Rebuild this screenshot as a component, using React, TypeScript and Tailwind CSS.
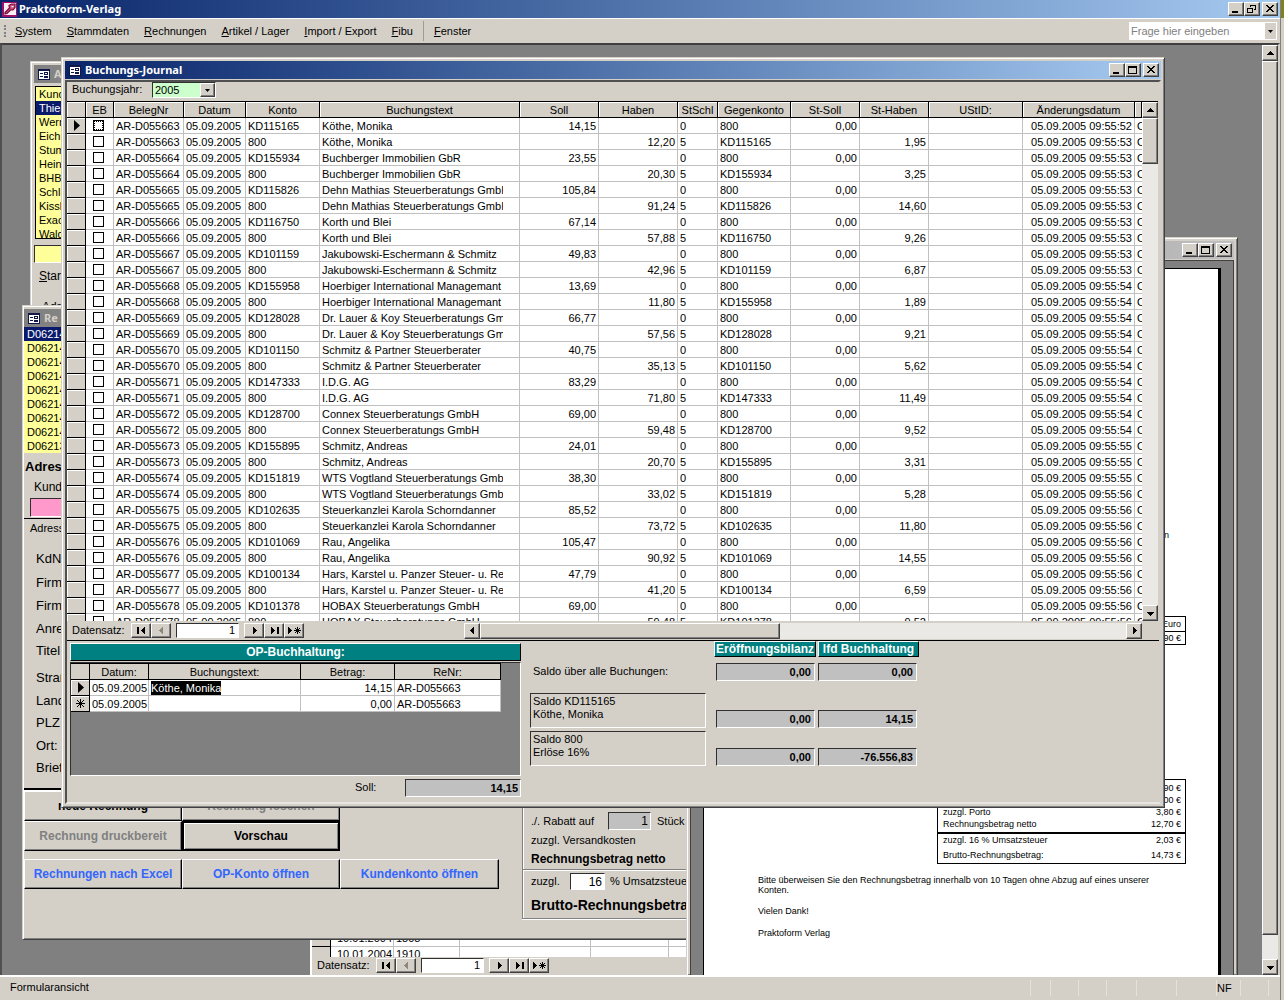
import React from "react";

type Booking = {
  beleg: string;
  konto: string;
  text: string;
  soll: string;
  haben: string;
  schl: string;
  gegen: string;
  stSoll: string;
  stHaben: string;
  zeit: string;
};

const source: [string, string, string, string, string, string][] = [
  ["63", "KD115165", "Köthe, Monika", "14,15", "12,20", "1,95"],
  ["64", "KD155934", "Buchberger Immobilien GbR", "23,55", "20,30", "3,25"],
  ["65", "KD115826", "Dehn Mathias Steuerberatungs GmbH", "105,84", "91,24", "14,60"],
  ["66", "KD116750", "Korth und Blei", "67,14", "57,88", "9,26"],
  ["67", "KD101159", "Jakubowski-Eschermann & Schmitz", "49,83", "42,96", "6,87"],
  ["68", "KD155958", "Hoerbiger International Managemant S", "13,69", "11,80", "1,89"],
  ["69", "KD128028", "Dr. Lauer & Koy Steuerberatungs Gm", "66,77", "57,56", "9,21"],
  ["70", "KD101150", "Schmitz & Partner Steuerberater", "40,75", "35,13", "5,62"],
  ["71", "KD147333", "I.D.G. AG", "83,29", "71,80", "11,49"],
  ["72", "KD128700", "Connex Steuerberatungs GmbH", "69,00", "59,48", "9,52"],
  ["73", "KD155895", "Schmitz, Andreas", "24,01", "20,70", "3,31"],
  ["74", "KD151819", "WTS Vogtland Steuerberatungs GmbH", "38,30", "33,02", "5,28"],
  ["75", "KD102635", "Steuerkanzlei Karola Schorndanner", "85,52", "73,72", "11,80"],
  ["76", "KD101069", "Rau, Angelika", "105,47", "90,92", "14,55"],
  ["77", "KD100134", "Hars, Karstel u. Panzer Steuer- u. Re", "47,79", "41,20", "6,59"],
  ["78", "KD101378", "HOBAX Steuerberatungs GmbH", "69,00", "59,48", "9,52"],
];

function seconds(i: number) {
  if (i === 0) return "52";
  if (i < 10) return "53";
  if (i < 20) return "54";
  if (i < 23) return "55";
  return "56";
}

const bookings: Booking[] = source.flatMap(([nr, kd, text, soll, haben, steuer], i) => [
  {
    beleg: `AR-D0556${nr}`, konto: kd, text, soll, haben: "", schl: "0", gegen: "800",
    stSoll: "0,00", stHaben: "", zeit: `05.09.2005 09:55:${seconds(2 * i)}`,
  },
  {
    beleg: `AR-D0556${nr}`, konto: "800", text, soll: "", haben, schl: "5", gegen: kd,
    stSoll: "", stHaben: steuer, zeit: `05.09.2005 09:55:${seconds(2 * i + 1)}`,
  },
]);

const raised =
  "border border-white border-r-[#404040] border-b-[#404040] bg-[#d4d0c8] shadow-[inset_-1px_-1px_0_#808080]";
const windowEdge =
  "border border-[#d4d0c8] border-r-[#404040] border-b-[#404040] bg-[#d4d0c8] shadow-[inset_1px_1px_0_#fff,inset_-1px_-1px_0_#808080]";
const sunken = "border border-[#303030] border-r-white border-b-white";

function Tri({ dir, color = "#000" }: { dir: "up" | "down" | "left" | "right"; color?: string }) {
  const d = {
    up: "M4 2h1v1h1v1h1v1h1v1H1V5h1V4h1V3h1z",
    down: "M1 3h7v1H7v1H6v1H5v1H4V6H3V5H2V4H1z",
    left: "M6 1v7H5V7H4V6H3V5H2V4h1V3h1V2h1V1z",
    right: "M3 1v7h1V7h1V6h1V5h1V4H6V3H5V2H4V1z",
  }[dir];
  return (
    <svg width="9" height="9" viewBox="0 0 9 9" shapeRendering="crispEdges" aria-hidden="true">
      <path d={d} fill={color} />
    </svg>
  );
}

function Caption({ kind, label }: { kind: "min" | "max" | "restore" | "close"; label: string }) {
  return (
    <button type="button" aria-label={label} className={`flex h-[14px] w-4 items-center justify-center ${raised}`}>
      <svg width="12" height="10" viewBox="0 0 12 10" shapeRendering="crispEdges" fill="none" stroke="#000" aria-hidden="true">
        {kind === "min" && <path d="M2 8h6" strokeWidth="2" />}
        {kind === "max" && <path d="M1.5 1.5h8v7h-8zM1 2h9" />}
        {kind === "restore" && <path d="M4.500 3V1.500h5v4H8M4 1.500h6M1.500 4.500h5v4h-5zM1 4h6" />}
        {kind === "close" && <path d="M2 1l7 7M3 1l7 7M9 1L2 8M10 1L3 8" />}
      </svg>
    </button>
  );
}

function FormIcon() {
  return (
    <svg width="12" height="11" viewBox="0 0 12 11" shapeRendering="crispEdges" aria-hidden="true">
      <path d="M0 0h12v11H0z" fill="#10184a" />
      <path d="M1 2h10v8H1z" fill="#fff" />
      <path d="M2 4.500h3M2 7.500h3" stroke="#10184a" />
      <path d="M6.500 3.500h3v2h-3zM6.500 7.500h3v1h-3z" fill="none" stroke="#10184a" />
    </svg>
  );
}

function TitleBar({ title, tone, icon = true }: { title: string; tone: string; icon?: boolean }) {
  return (
    <div className={`flex h-[18px] items-center gap-1 pr-[2px] pl-1 ${tone}`}>
      {icon && <FormIcon />}
      <h2 className="flex-1 overflow-hidden font-['Noto_Sans',sans-serif] text-[11px] leading-[18px] font-bold whitespace-nowrap">
        {title}
      </h2>
      <div className="flex">
        <Caption kind="min" label="Minimieren" />
        <Caption kind="max" label="Maximieren" />
        <div className="w-[2px]" />
        <Caption kind="close" label="Schließen" />
      </div>
    </div>
  );
}

function NavButton({ kind, label }: { kind: "first" | "prev" | "next" | "last" | "new"; label: string }) {
  return (
    <button type="button" aria-label={label} className={`flex h-[15px] w-5 items-center justify-center ${raised}`}>
      <svg width="15" height="9" viewBox="0 0 15 9" shapeRendering="crispEdges" aria-hidden="true">
        {kind === "first" && <path d="M3 1h2v7H3zM11 1v7h-1V7H9V6H8V5H7V4h1V3h1V2h1V1z" />}
        {kind === "prev" && <path d="M9 1v7H8V7H7V6H6V5H5V4h1V3h1V2h1V1z" fill="#8c8880" />}
        {kind === "next" && <path d="M6 1v7h1V7h1V6h1V5h1V4H9V3H8V2H7V1z" />}
        {kind === "last" && <path d="M4 1v7h1V7h1V6h1V5h1V4H7V3H6V2H5V1zM10 1h2v7h-2z" />}
        {kind === "new" && (
          <g>
            <path d="M1 1v7h1V7h1V6h1V5h1V4H4V3H3V2H2V1z" />
            <path d="M10.500 1v7M7 4.500h7M8 2l5 5M13 2L8 7" stroke="#000" />
          </g>
        )}
      </svg>
    </button>
  );
}

function RecordNav({ id }: { id: string }) {
  return (
    <div className="flex items-center">
      <label htmlFor={id} className="w-[59px]">Datensatz:</label>
      <NavButton kind="first" label="Erster Datensatz" />
      <NavButton kind="prev" label="Vorheriger Datensatz" />
      <input id={id} defaultValue="1" className={`mx-[5px] h-[15px] w-[63px] bg-white pr-[3px] text-right ${sunken}`} />
      <NavButton kind="next" label="Nächster Datensatz" />
      <NavButton kind="last" label="Letzter Datensatz" />
      <NavButton kind="new" label="Neuer Datensatz" />
    </div>
  );
}

function ScrollButton({ dir, label }: { dir: "up" | "down" | "left" | "right"; label: string }) {
  return (
    <button type="button" aria-label={label} className={`flex h-4 w-4 shrink-0 items-center justify-center ${raised}`}>
      <Tri dir={dir} />
    </button>
  );
}

function AddressWindow() {
  const names = ["Kund", "Thiel", "Wern", "Eichn", "Stum", "Hein", "BHB", "Schlu", "Kissle", "Exac", "Wald"];
  return (
    <section className={`absolute top-4 left-7 w-[300px] p-[3px] ${windowEdge}`}>
      <TitleBar title="Ad" tone="bg-linear-to-r from-[#808080] to-[#c0c0c0] text-[#d4d0c8]" />
      <div className="h-[300px] pt-[3px]">
        <ul className="mx-[1px] h-[153px] overflow-hidden border border-black bg-[#ffff99] pl-[3px] leading-[14px]">
          {names.map((n, i) => (
            <li key={n} className={i === 1 ? "-ml-[3px] bg-[#0a1a6a] pl-[3px] text-white" : ""}>{n}</li>
          ))}
        </ul>
        <input aria-label="Suche" className={`mt-[6px] h-[18px] w-40 bg-[#ffff99] ${sunken}`} />
        <p className="mt-[5px] pl-[5px] text-[12px] leading-4"><u>S</u>tart</p>
        <p className="mt-[15px] pl-2 text-[12px] leading-4">Adr</p>
      </div>
    </section>
  );
}

const formLabels: [string, string][] = [
  ["KdNr", "mt-[15px]"], ["Firma", "mt-2"], ["Firma", "mt-[7px]"], ["Anred", "mt-[7px]"], ["Titel", "mt-[6px]"],
  ["Straß", "mt-[11px]"], ["Land", "mt-[7px]"], ["PLZ", "mt-[6px]"], ["Ort:", "mt-[7px]"], ["Brief", "mt-[6px]"],
];

function PushButton({ children, tone = "text-black", strong = false }: {
  children: React.ReactNode; tone?: string; strong?: boolean;
}) {
  return (
    <button
      type="button"
      className={`h-[30px] text-[12px] font-bold ${tone} ${
        strong
          ? "border-2 border-black bg-[#d4d0c8] shadow-[inset_1px_1px_0_#fff,inset_-1px_-1px_0_#808080]"
          : "border border-white border-r-black border-b-black bg-[#d4d0c8] shadow-[inset_-1px_-1px_0_#808080]"
      }`}
    >
      {children}
    </button>
  );
}

function InvoiceWindow() {
  const numbers = ["D06214", "D06214", "D06214", "D06214", "D06214", "D06214", "D06214", "D06214", "D06213"];
  return (
    <section className={`absolute top-[260px] left-5 w-[670px] px-[1px] pt-[3px] pb-[3px] ${windowEdge}`}>
      <TitleBar title="Re" tone="bg-linear-to-r from-[#808080] to-[#c0c0c0] text-[#d4d0c8]" />
      <ul className="w-40 bg-[#ffff99] pl-[3px] leading-[14px]">
        {numbers.map((n, i) => (
          <li key={i} className={i === 0 ? "-ml-[3px] bg-[#0a1a6a] pl-[3px] text-white" : ""}>{n}</li>
        ))}
      </ul>
      <h3 className="mt-[6px] pl-[1px] text-[13px] leading-4 font-bold">Adres</h3>
      <label htmlFor="kunde" className="mt-1 block pl-[10px] text-[12px] leading-4">Kund</label>
      <input id="kunde" className={`mt-[3px] ml-[6px] block h-[19px] w-[120px] bg-[#ff99cc] ${sunken}`} />
      <div className="mt-[1px] border-t border-black" />
      <p className="mt-[1px] pl-[6px] leading-4">Adress</p>
      {formLabels.map(([text, gap], i) => (
        <p key={i} className={`pl-3 text-[13px] leading-4 ${gap}`}>{text}</p>
      ))}
      <div className="mt-[12px] h-[3px] border-t-2 border-b border-t-black border-b-white" />
      <div className="flex">
        <div className="w-[475px]">
          <div className="grid grid-cols-[158px_158px_159px]">
            <PushButton>neue Rechnung</PushButton>
            <PushButton tone="text-[#808080]">Rechnung löschen</PushButton>
            <span />
            <PushButton tone="text-[#808080]">Rechnung druckbereit</PushButton>
            <PushButton strong>Vorschau</PushButton>
          </div>
          <div className="mt-2 grid grid-cols-[158px_158px_159px]">
            <PushButton tone="text-[#3366ff]">Rechnungen nach Excel</PushButton>
            <PushButton tone="text-[#3366ff]">OP-Konto öffnen</PushButton>
            <PushButton tone="text-[#3366ff]">Kundenkonto öffnen</PushButton>
          </div>
        </div>
        <div className="ml-[23px] h-[128px] flex-1 border-b border-l border-[#808080] pl-2 whitespace-nowrap shadow-[0_1px_0_#fff,inset_1px_0_0_#fff]">
          <div className="mt-[21px] flex h-[18px] items-center">
            <label htmlFor="rabatt" className="w-[77px] shrink-0">./. Rabatt auf</label>
            <input id="rabatt" defaultValue="1" className={`h-[18px] w-[43px] shrink-0 bg-[#c0c0c0] pr-[2px] text-right text-[12px] ${sunken}`} />
            <span className="pl-[6px]">Stück</span>
          </div>
          <p className="mt-[2px] leading-4">zuzgl. Versandkosten</p>
          <p className="mt-[3px] text-[12px] leading-4 font-bold">Rechnungsbetrag netto</p>
          <div className="mt-[2px] -ml-2 h-[2px] border-t border-b border-t-[#808080] border-b-white" />
          <div className="mt-[2px] flex h-[17px] items-center">
            <label htmlFor="ust" className="w-[39px] shrink-0">zuzgl.</label>
            <input id="ust" defaultValue="16" className={`h-[17px] w-[35px] shrink-0 bg-white pr-[2px] text-right text-[12px] ${sunken}`} />
            <span className="pl-[5px]">% Umsatzsteuer</span>
          </div>
          <p className="mt-[6px] text-[14px] leading-[18px] font-bold">Brutto-Rechnungsbetra</p>
        </div>
      </div>
      <div className="h-[17px]" />
    </section>
  );
}

function AccountWindow() {
  return (
    <section className="absolute bottom-0 left-[308px] w-[382px] border-l-2 border-white bg-[#d4d0c8]">
      <div className="h-[26px] overflow-hidden">
        <table className="w-full table-fixed border-separate border-spacing-0 leading-[15px]">
          <colgroup>
            <col className="w-[19px]" /><col className="w-[63px]" /><col className="w-[66px]" /><col className="w-[131px]" /><col className="w-[78px]" /><col />
          </colgroup>
          <tbody>
            {["1808", "1910"].map((k) => (
              <tr key={k}>
                <td className="h-4 border-r border-b border-black bg-[#d4d0c8]" />
                <td className="h-4 border-r border-b border-[#c0c0c0] bg-white pl-[6px]">10.01.2004</td>
                <td className="h-4 border-r border-b border-[#c0c0c0] bg-white pl-[2px]">{k}</td>
                <td className="h-4 border-r border-b border-[#c0c0c0] bg-white" />
                <td className="h-4 border-r border-b border-[#c0c0c0] bg-white" />
                <td className="h-4 border-b border-[#c0c0c0] bg-white" />
              </tr>
            ))}
          </tbody>
        </table>
      </div>
      <div className="h-[18px] pl-[5px]"><RecordNav id="satz-konto" /></div>
    </section>
  );
}

function ReportLine({ label = "", value }: { label?: string; value: string }) {
  return (
    <div className="flex justify-between leading-3">
      <span>{label}</span>
      <span>{value}</span>
    </div>
  );
}

function ReportWindow() {
  return (
    <section className={`absolute top-48 right-6 bottom-0 left-[684px] overflow-hidden border-b-0 px-[3px] pt-[3px] ${windowEdge}`}>
      <TitleBar title="" icon={false} tone="bg-linear-to-r from-[#808080] to-[#c0c0c0] text-[#d4d0c8]" />
      <div className="mt-[1px] h-full border border-[#404040] bg-[#808080] pt-[7px] pr-3 pl-3">
        <div className="h-full border-t border-r-[3px] border-l border-black bg-white pr-8 pl-[54px] text-[9px] leading-[10px] text-black">
          <p className="pt-[261px] pr-[17px] text-right">n</p>
          <div className="mt-[76px] ml-[179px] border border-black text-right leading-[14px]">
            <p className="border-b border-black pr-1">Euro</p>
            <p className="pr-1 leading-3">90 €</p>
          </div>
          <div className="mt-[134px] ml-[179px] border border-black py-[2px] pr-1 pl-[5px]">
            <ReportLine value="90 €" />
            <ReportLine value="00 €" />
            <ReportLine label="zuzgl. Porto" value="3,80 €" />
            <ReportLine label="Rechnungsbetrag netto" value="12,70 €" />
          </div>
          <div className="ml-[179px] flex flex-col gap-[3px] border border-black pr-1 pb-[2px] pl-[5px]">
            <ReportLine label="zuzgl. 16 % Umsatzsteuer" value="2,03 €" />
            <ReportLine label="Brutto-Rechnungsbetrag:" value="14,73 €" />
          </div>
          <p className="mt-[11px] pr-[18px]">
            Bitte überweisen Sie den Rechnungsbetrag innerhalb von 10 Tagen ohne Abzug auf eines unserer Konten.
          </p>
          <p className="mt-[11px]">Vielen Dank!</p>
          <p className="mt-3">Praktoform Verlag</p>
        </div>
      </div>
    </section>
  );
}

const headers = [
  "", "EB", "BelegNr", "Datum", "Konto", "Buchungstext", "Soll", "Haben", "StSchl", "Gegenkonto", "St-Soll", "St-Haben", "UStID:", "Änderungsdatum", "",
];
const cell = "h-4 overflow-hidden border-r border-b border-[#c0c0c0] px-[2px] pt-[1px]";

function JournalTable() {
  return (
    <table className="w-full table-fixed border-separate border-spacing-0 bg-white leading-[14px] whitespace-nowrap">
      <colgroup>
        <col className="w-[19px]" /><col className="w-[28px]" /><col className="w-[70px]" /><col className="w-[62px]" />
        <col className="w-[74px]" /><col className="w-[200px]" /><col className="w-[79px]" /><col className="w-[79px]" />
        <col className="w-[40px]" /><col className="w-[73px]" /><col className="w-[69px]" /><col className="w-[69px]" />
        <col className="w-[94px]" /><col className="w-[112px]" /><col />
      </colgroup>
      <thead>
        <tr>
          {headers.map((h, i) => (
            <th key={i} scope="col" className="h-[17px] border-t border-r border-b border-black bg-[#d4d0c8] font-normal shadow-[inset_1px_1px_0_#fff]">
              {h}
            </th>
          ))}
        </tr>
      </thead>
      <tbody>
        {bookings.map((b, i) => (
          <tr key={i}>
            <td className="h-4 border-r border-b border-black bg-[#d4d0c8] pl-[6px] shadow-[inset_1px_1px_0_#fff]">
              {i === 0 && (
                <svg width="8" height="11" viewBox="0 0 8 11" className="block" aria-label="Aktueller Datensatz">
                  <path d="M1 0l6 5.500L1 11z" />
                </svg>
              )}
            </td>
            <td className="h-4 border-r border-b border-[#c0c0c0] pr-[2px]">
              <input
                type="checkbox"
                aria-label={`EB ${b.beleg}`}
                className={`mx-auto block h-[11px] w-[11px] appearance-none border border-black bg-white ${i === 0 ? "outline-dotted outline-1 -outline-offset-2 outline-black" : ""}`}
              />
            </td>
            <td className={cell}>{b.beleg}</td>
            <td className={cell}>05.09.2005</td>
            <td className={cell}>{b.konto}</td>
            <td className={cell}><div className="w-[181px] overflow-hidden">{b.text}</div></td>
            <td className={`${cell} text-right`}>{b.soll}</td>
            <td className={`${cell} text-right`}>{b.haben}</td>
            <td className={cell}>{b.schl}</td>
            <td className={cell}>{b.gegen}</td>
            <td className={`${cell} text-right`}>{b.stSoll}</td>
            <td className={`${cell} text-right`}>{b.stHaben}</td>
            <td className={cell} />
            <td className={`${cell} text-right`}>{b.zeit}</td>
            <td className="h-4 overflow-hidden border-b border-[#c0c0c0] pt-[1px] pl-[2px]">O</td>
          </tr>
        ))}
      </tbody>
    </table>
  );
}

function OpenItems() {
  const head = "h-[17px] border-t border-r border-b border-black bg-[#d4d0c8] font-normal";
  return (
    <div className={`h-[114px] bg-[#808080] ${sunken}`}>
      <table className="w-[430px] table-fixed border-separate border-spacing-0 bg-white leading-[14px]">
        <colgroup>
          <col className="w-[19px]" /><col className="w-[59px]" /><col className="w-[152px]" /><col className="w-[94px]" /><col className="w-[106px]" />
        </colgroup>
        <thead>
          <tr>
            {["", "Datum:", "Buchungstext:", "Betrag:", "ReNr:"].map((h, i) => (
              <th key={i} scope="col" className={head}>{h}</th>
            ))}
          </tr>
        </thead>
        <tbody>
          {[["Köthe, Monika", "14,15"], ["", "0,00"]].map(([text, betrag], i) => (
            <tr key={i}>
              <td className="h-4 border-r border-b border-black bg-[#d4d0c8] pl-1 shadow-[inset_1px_1px_0_#fff]">
                <svg width="11" height="11" viewBox="0 0 11 11" className="block" aria-hidden="true">
                  {i === 0 ? <path d="M3 0l6 5.500L3 11z" /> : <path d="M5.500 1v9M1 5.500h9M2 2l7 7M9 2L2 9" stroke="#000" />}
                </svg>
              </td>
              <td className="h-4 border-r border-b border-[#c0c0c0] pt-[1px] pl-[2px]">05.09.2005</td>
              <td className={cell}>{text && <span className="block w-fit bg-black text-white">{text}</span>}</td>
              <td className={`${cell} text-right`}>{betrag}</td>
              <td className={cell}>AR-D055663</td>
            </tr>
          ))}
        </tbody>
      </table>
    </div>
  );
}

function Amount({ value, label }: { value: string; label: string }) {
  return (
    <input
      readOnly
      value={value}
      aria-label={label}
      className={`h-[18px] w-full self-end bg-[#c0c0c0] pr-[3px] text-right text-[11px] font-bold ${sunken}`}
    />
  );
}

const totalsRow = "grid grid-cols-[183px_99px_99px] gap-x-[3px]";
const accountBox = `mr-[7px] h-[35px] pt-[1px] pl-[2px] leading-[13px] ${sunken}`;

function Totals() {
  const head =
    "h-4 border border-white border-r-black border-b-black bg-[#008080] text-center text-[12px] leading-[14px] font-bold text-white";
  return (
    <div className="pl-[9px]">
      <div className="grid grid-cols-[102px_101px] gap-x-[2px] pl-[184px]">
        <div className={head}>Eröffnungsbilanz</div>
        <div className={head}>lfd Buchhaltung</div>
      </div>
      <div className={`mt-[6px] ${totalsRow}`}>
        <span className="pl-[3px] leading-4">Saldo über alle Buchungen:</span>
        <Amount value="0,00" label="Saldo Eröffnungsbilanz" />
        <Amount value="0,00" label="Saldo lfd Buchhaltung" />
      </div>
      <div className={`mt-3 ${totalsRow}`}>
        <div className={accountBox}>Saldo KD115165<br />Köthe, Monika</div>
        <Amount value="0,00" label="Saldo KD115165 Eröffnungsbilanz" />
        <Amount value="14,15" label="Saldo KD115165 lfd Buchhaltung" />
      </div>
      <div className={`mt-[3px] ${totalsRow}`}>
        <div className={accountBox}>Saldo 800<br />Erlöse 16%</div>
        <Amount value="0,00" label="Saldo 800 Eröffnungsbilanz" />
        <Amount value="-76.556,83" label="Saldo 800 lfd Buchhaltung" />
      </div>
    </div>
  );
}

function JournalWindow() {
  return (
    <section className={`absolute top-3 right-[97px] left-[59px] p-[3px] ${windowEdge}`}>
      <TitleBar title="Buchungs-Journal" tone="bg-linear-to-r from-[#0a246a] to-[#a6caf0] text-white" />
      <div className="mt-[1px] border-2 border-[#505050] border-r-[#d4d0c8] border-b-[#e8e6e0]">
        <div className="flex h-[19px] items-start pl-[5px]">
          <label htmlFor="jahr" className="w-20 leading-[15px]">Buchungsjahr:</label>
          <div className="relative h-4">
            <select id="jahr" defaultValue="2005" className={`block h-4 w-16 appearance-none bg-[#ccffcc] pl-[2px] text-[11px] leading-[14px] ${sunken}`}>
              <option>2004</option>
              <option>2005</option>
            </select>
            <span className={`pointer-events-none absolute top-[1px] right-[1px] flex h-[14px] w-[15px] items-center justify-center ${raised}`}>
              <svg width="5" height="3" viewBox="0 0 5 3" aria-hidden="true"><path d="M0 0h5L2.500 3z" /></svg>
            </span>
          </div>
        </div>
        <div className="flex h-[520px] overflow-hidden">
          <div className="min-w-0 flex-1 overflow-hidden"><JournalTable /></div>
          <div className="mr-[1px] flex w-4 flex-col border-t border-black bg-[#ebe9e5]">
            <ScrollButton dir="up" label="Nach oben" />
            <div className={`h-[46px] ${raised}`} />
            <div className="flex-1" />
            <ScrollButton dir="down" label="Nach unten" />
          </div>
        </div>
        <div className="flex h-5 items-center border-b border-black pr-[17px] pl-[5px]">
          <RecordNav id="satz-journal" />
          <div className="ml-[160px] flex h-4 flex-1 bg-[#ebe9e5]">
            <ScrollButton dir="left" label="Nach links" />
            <div className={`h-4 w-[300px] ${raised}`} />
            <div className="flex-1" />
            <ScrollButton dir="right" label="Nach rechts" />
          </div>
        </div>
        <div className="flex h-[161px] pl-[3px]">
          <div className="w-[451px] pt-[2px]">
            <h3 className="mb-[1px] h-[18px] border border-white border-r-black border-b-black bg-[#008080] text-center text-[12px] leading-4 font-bold text-white">
              OP-Buchhaltung:
            </h3>
            <OpenItems />
            <div className="mt-[3px] flex justify-end">
              <label htmlFor="soll" className="w-[50px] leading-4">Soll:</label>
              <input id="soll" readOnly value="14,15" className={`h-[18px] w-[116px] bg-[#c0c0c0] pr-[2px] text-right text-[11px] font-bold ${sunken}`} />
            </div>
          </div>
          <Totals />
        </div>
      </div>
    </section>
  );
}

const menu: [string, string][] = [
  ["S", "ystem"], ["S", "tammdaten"], ["R", "echnungen"], ["A", "rtikel / Lager"], ["I", "mport / Export"], ["F", "ibu"],
];

export default function App() {
  return (
    <div className="flex h-screen overflow-hidden bg-[#d4d0c8] font-['Liberation_Sans',Arial,sans-serif] text-[11px] text-black">
      <div className="flex min-w-0 flex-1 flex-col">
        <header className="flex h-[18px] shrink-0 items-center bg-linear-to-r from-[#0a246a] to-[#a6caf0] pr-[2px] pl-[2px] text-white">
          <svg width="15" height="15" viewBox="0 0 15 15" aria-hidden="true">
            <path d="M0 0h15v15H0z" fill="#a01068" />
            <path d="M2 1h12v12H2z" fill="#fbeef4" />
            <path d="M7 3.500L9.500 2H13v3.500L11 8H8.500L5 11.500 3 12v-1.500L7.500 6z" fill="#c8507c" stroke="#780838" strokeWidth="1.200" />
            <path d="M9.500 4h2v1.200h-2z" fill="#fff" />
          </svg>
          <h1 className="flex-1 pl-[2px] font-['Noto_Sans',sans-serif] text-[11px] leading-[18px] font-bold">Praktoform-Verlag</h1>
          <Caption kind="min" label="Minimieren" />
          <Caption kind="restore" label="Wiederherstellen" />
          <div className="w-[2px]" />
          <Caption kind="close" label="Schließen" />
        </header>
        <nav className="flex h-[25px] shrink-0 items-center border-t border-white pr-[3px] pl-1">
          <span className="mr-[9px] h-3 border-l-2 border-dotted border-[#808080]" />
          <div className="flex gap-[15px]">
            {menu.map(([key, rest]) => (
              <button key={rest} type="button"><u>{key}</u>{rest}</button>
            ))}
          </div>
          <span className="mx-[10px] h-5 border-l border-[#a09c94]" />
          <button type="button"><u>F</u>enster</button>
          <div className="ml-auto flex h-[18px] w-[148px] bg-white">
            <input aria-label="Frage" placeholder="Frage hier eingeben" className="min-w-0 flex-1 bg-white pl-[2px] leading-[18px] placeholder:text-[#808080]" />
            <button type="button" aria-label="Fragen anzeigen" className="m-[1px] flex w-[11px] items-center justify-center bg-[#d4d0c8]">
              <svg width="5" height="3" viewBox="0 0 5 3" aria-hidden="true"><path d="M0 0h5L2.500 3z" /></svg>
            </button>
          </div>
        </nav>
        <main className="flex min-h-0 flex-1 border-t-2 border-r-2 border-l-2 border-[#808080] border-t-[#404040] border-r-[#d4d0c8] border-l-[#505050]">
          <div className="relative min-w-0 flex-1 overflow-hidden bg-[#808080]">
            <AddressWindow />
            <AccountWindow />
            <InvoiceWindow />
            <ReportWindow />
            <JournalWindow />
          </div>
          <div className="flex w-4 flex-col bg-[#ebe9e5]">
            <ScrollButton dir="up" label="Nach oben" />
            <div className={`flex-1 ${raised}`} />
            <div className="h-6" />
            <ScrollButton dir="down" label="Nach unten" />
          </div>
        </main>
        <footer className="flex h-[25px] shrink-0 items-center border-t-2 border-white pb-[2px] pl-[10px]">
          <span className="flex-1">Formularansicht</span>
          <div className="flex h-4 [&>span]:border-l [&>span]:border-[#e4e1db]">
            <span className="w-5" /><span className="w-7" /><span className="w-7" /><span className="w-[30px]" />
            <span className="w-10" /><span className="w-[40px]" />
            <span className="w-6 leading-4">NF</span>
            <span className="w-7" /><span className="w-3" />
          </div>
        </footer>
      </div>
      <aside className="w-1 border-l border-[#808080] bg-[#d4d0c8]"><div className="h-[18px] bg-[#808020]" /></aside>
    </div>
  );
}
